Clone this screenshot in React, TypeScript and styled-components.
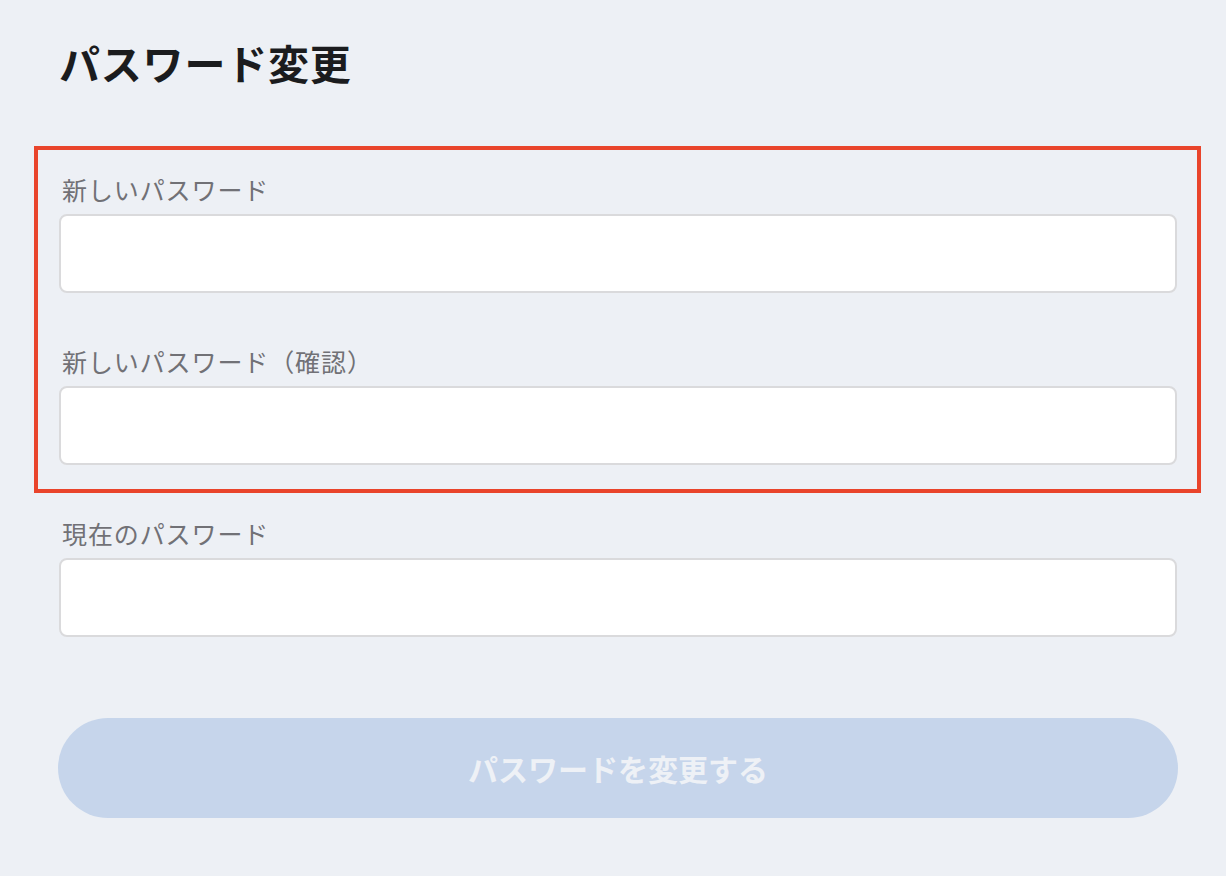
import React from "react";
import styled, { createGlobalStyle } from "styled-components";

const GlobalStyle = createGlobalStyle`
  html, body {
    margin: 0;
    padding: 0;
    background: #edf0f5;
  }
  body {
    font-family: "Noto Sans CJK JP", "Noto Sans", sans-serif;
  }
  * { box-sizing: border-box; }
`;

const Page = styled.main`
  width: 1226px;
  min-height: 876px;
  background: #edf0f5;
  padding: 32px 49px 0 59px;
`;

const Title = styled.h1`
  margin: 0;
  font-size: 41px;
  line-height: 60px;
  font-weight: 700;
  color: #1b1c1e;
  letter-spacing: 0.8px;
`;

const Form = styled.form`
  display: flex;
  flex-direction: column;
  gap: 50px;
  margin-top: 79px;
`;

const Highlight = styled.div`
  display: flex;
  flex-direction: column;
  gap: 50px;
  margin: -25px -24px -28px -25px;
  padding: 21px 20px 24px 21px;
  border: 4px solid #e9442b;
`;

const Field = styled.div`
  display: flex;
  flex-direction: column;
  gap: 7px;
`;

const Label = styled.label`
  font-size: 25px;
  line-height: 36px;
  color: #717176;
  padding-left: 3px;
  letter-spacing: 0.9px;
`;

const Input = styled.input`
  width: 100%;
  height: 79px;
  border: 2px solid #dadadc;
  border-radius: 8px;
  background: #ffffff;
  font-size: 24px;
  padding: 0 16px;
  outline: none;
`;

const Button = styled.button`
  margin-top: 81px;
  width: 1120px;
  margin-left: -1px;
  height: 100px;
  border: none;
  border-radius: 50px;
  background: #c6d5eb;
  color: #eef1f6;
  font-family: "Noto Sans CJK JP", "Noto Sans", sans-serif;
  font-size: 30px;
  font-weight: 700;
  letter-spacing: 0;
  cursor: default;
`;

const PasswordField = ({ id, label }: { id: string; label: string }) => (
  <Field>
    <Label htmlFor={id}>{label}</Label>
    <Input id={id} type="password" />
  </Field>
);

export default function App() {
  return (
    <>
      <GlobalStyle />
      <Page>
        <Title>パスワード変更</Title>
        <Form onSubmit={(e) => e.preventDefault()}>
          <Highlight>
            <PasswordField id="new" label="新しいパスワード" />
            <PasswordField id="confirm" label="新しいパスワード（確認）" />
          </Highlight>
          <PasswordField id="current" label="現在のパスワード" />
        </Form>
        <Button type="button" disabled>
          パスワードを変更する
        </Button>
      </Page>
    </>
  );
}
